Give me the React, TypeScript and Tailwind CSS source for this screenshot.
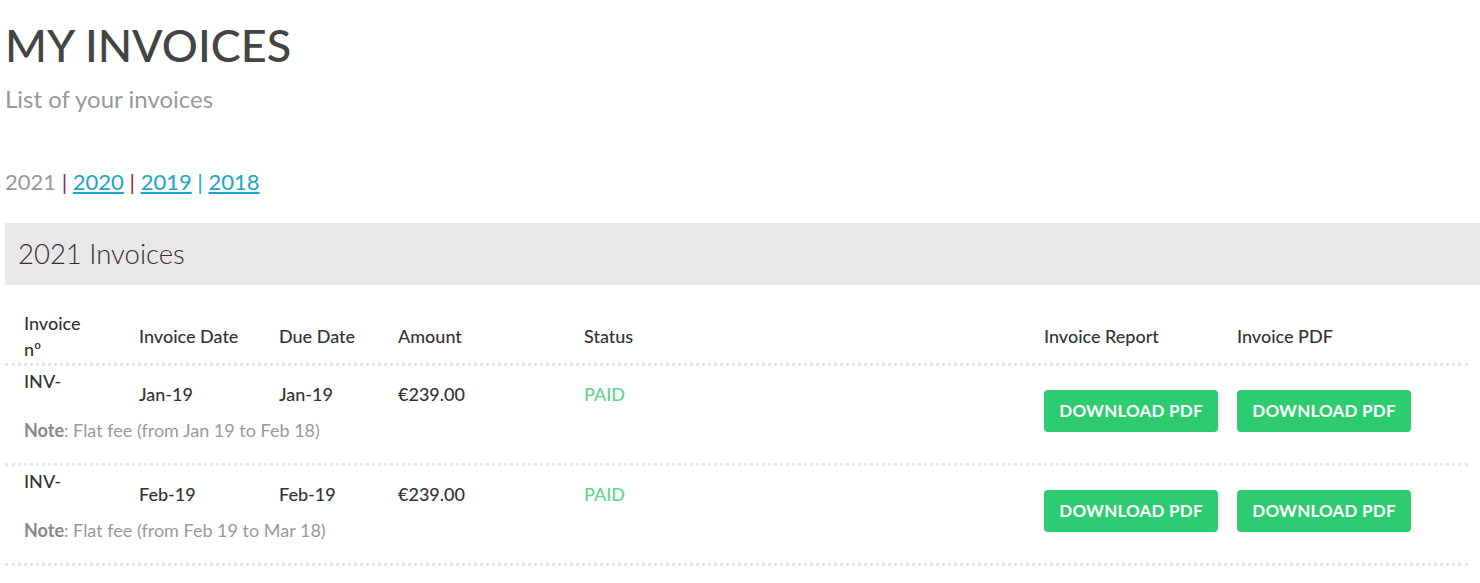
import React from 'react';

type Invoice = {
  number: string;
  date: string;
  due: string;
  amount: string;
  status: string;
  note: string;
};

const invoices: Invoice[] = [
  { number: 'INV-', date: 'Jan-19', due: 'Jan-19', amount: '€239.00', status: 'PAID', note: 'Flat fee (from Jan 19 to Feb 18)' },
  { number: 'INV-', date: 'Feb-19', due: 'Feb-19', amount: '€239.00', status: 'PAID', note: 'Flat fee (from Feb 19 to Mar 18)' },
];

const cols = 'grid grid-cols-[115px_140px_119px_186px_460px_193px_1fr] pl-[19px]';

const DownloadButton: React.FC = () => (
  <button className="w-[174px] h-[42px] rounded-[4px] bg-[#2ecc71] text-white font-bold text-[17px] uppercase tracking-[0.2px]">
    Download PDF
  </button>
);

const App: React.FC = () => {
  return (
    <div className="min-h-[583px] bg-white pl-[5px] font-['Lato','Open_Sans',sans-serif] text-[#333]">
      <h1 className="pt-[17px] text-[45px] leading-[56px] font-medium text-[#444]">MY INVOICES</h1>
      <p className="mt-[11px] text-[24px] leading-[30px] text-[#999]">List of your invoices</p>

      <div className="mt-[53px] text-[22px] leading-[30px] text-[#999]">
        2021 <span className="text-[#8e2a6b]">|</span>{' '}
        <a href="#" className="text-[#1ba6c8] underline">2020</a>{' '}
        <span className="text-[#a3241f]">|</span>{' '}
        <a href="#" className="text-[#1ba6c8] underline">2019</a>{' '}
        <span className="text-[#1ba6c8]">|</span>{' '}
        <a href="#" className="text-[#1ba6c8] underline">2018</a>
      </div>

      <div className="mt-[26px] h-[62px] bg-[#e9e7e8] pl-[13px] flex items-center">
        <h2 className="text-[27.5px] font-light text-[#333]">2021 Invoices</h2>
      </div>

      <div className="w-[1463px]">
        <div className={`${cols} items-center pt-[25px] pb-[1px] border-b-[3px] border-dotted border-[#e6e6e6] text-[18px] leading-[26px] font-medium text-[#333]`}>
          <div>Invoice<br />nº</div>
          <div>Invoice Date</div>
          <div>Due Date</div>
          <div>Amount</div>
          <div>Status</div>
          <div>Invoice Report</div>
          <div>Invoice PDF</div>
        </div>

        {invoices.map((inv, i) => (
          <div
            key={i}
            className={`${cols} grid-rows-[48px_auto] border-b-[3px] border-dotted border-[#e6e6e6] text-[18px] leading-[24px]`}
          >
            <div className="pt-[3px] font-medium text-[#333]">{inv.number}</div>
            <div className="pt-[16px] font-medium text-[#333]">{inv.date}</div>
            <div className="pt-[16px] font-medium text-[#333]">{inv.due}</div>
            <div className="pt-[16px] font-medium text-[#333]">{inv.amount}</div>
            <div className="pt-[16px] font-medium text-[#5fd68e]">{inv.status}</div>
            <div className="row-span-2 pt-[24px]"><DownloadButton /></div>
            <div className="row-span-2 pt-[24px]"><DownloadButton /></div>
            <div className="col-span-5 pt-[4px] pb-[21px] text-[#999]">
              <span className="font-bold text-[#888]">Note</span>: {inv.note}
            </div>
          </div>
        ))}
      </div>
    </div>
  );
};

export default App;
